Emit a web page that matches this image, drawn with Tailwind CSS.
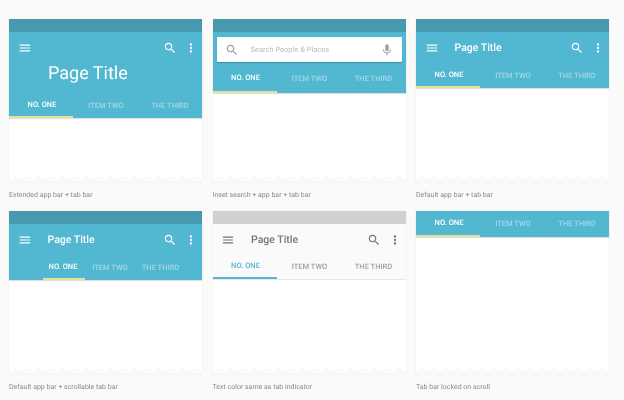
<!DOCTYPE html>
<html lang="en">
<head>
  <meta charset="UTF-8">
  <title>Tabs</title>
  <script src="https://cdn.jsdelivr.net/npm/@tailwindcss/browser@4"></script>
</head>
<body class="bg-[#fafafa] font-['Roboto',sans-serif] w-[624px] h-[400px] overflow-hidden [text-rendering:geometricPrecision]">
  <svg class="hidden">
    <symbol id="menu" viewBox="0 0 24 24"><path d="M3 18h18v-2H3v2zm0-5h18v-2H3v2zm0-7v2h18V6H3z"/></symbol>
    <symbol id="search" viewBox="0 0 24 24"><path d="M15.5 14h-.79l-.28-.27C15.41 12.59 16 11.11 16 9.5 16 5.91 13.09 3 9.5 3S3 5.91 3 9.5 5.91 16 9.5 16c1.61 0 3.09-.59 4.23-1.57l.27.28v.79l5 4.99L20.49 19l-4.99-5zm-6 0C7.01 14 5 11.99 5 9.5S7.01 5 9.5 5 14 7.01 14 9.5 11.99 14 9.5 14z"/></symbol>
    <symbol id="more" viewBox="0 0 24 24"><path d="M12 8c1.1 0 2-.9 2-2s-.9-2-2-2-2 .9-2 2 .9 2 2 2zm0 2c-1.1 0-2 .9-2 2s.9 2 2 2 2-.9 2-2-.9-2-2-2zm0 6c-1.1 0-2 .9-2 2s.9 2 2 2 2-.9 2-2-.9-2-2-2z"/></symbol>
    <symbol id="mic" viewBox="0 0 24 24"><path d="M12 14c1.66 0 2.99-1.34 2.99-3L15 5c0-1.66-1.34-3-3-3S9 3.34 9 5v6c0 1.66 1.34 3 3 3zm5.3-3c0 3-2.54 5.1-5.3 5.1S6.7 14 6.7 11H5c0 3.41 2.72 6.23 6 6.72V21h2v-3.28c3.28-.48 6-3.3 6-6.72h-1.7z"/></symbol>
    <symbol id="zig" viewBox="0 0 193 6" preserveAspectRatio="none">
      <path fill="#fafafa" stroke="#eeeeee" stroke-width="0.7" d="M-1 6 L0 5 L6 1 L12 5 L18 1 L24 5 L30 1 L36 5 L42 1 L48 5 L54 1 L60 5 L66 1 L72 5 L78 1 L84 5 L90 1 L96 5 L102 1 L108 5 L114 1 L120 5 L126 1 L132 5 L138 1 L144 5 L150 1 L156 5 L162 1 L168 5 L174 1 L180 5 L186 1 L192 5 L194 4 L194 7 L-1 7 Z"/>
    </symbol>
  </svg>

  <div class="grid grid-cols-[193px_193px_193px] gap-x-[10.5px] gap-y-[11px] pl-[9px] pt-[19px] text-[#8a8a8a] blur-[0.45px]">

    <!-- Extended app bar -->
    <div>
      <div class="relative h-[163px] bg-white shadow-[0_0_1px_rgba(0,0,0,0.15)]">
        <div class="h-[13px] bg-[#4799ad]"></div>
        <div class="bg-[#52b7d1] h-[86px] flex flex-col text-white shadow-[0_1px_1px_rgba(0,0,0,0.12)]">
          <div class="h-[31px] flex items-center pl-[8.5px] pr-[4px] pt-[1px]">
            <svg class="w-[14px] h-[14px] fill-white"><use href="#menu"/></svg>
            <svg class="w-[14px] h-[14px] fill-white ml-auto"><use href="#search"/></svg>
            <svg class="w-[14px] h-[14px] fill-white ml-[7px]"><use href="#more"/></svg>
          </div>
          <div class="h-[29px] pl-[39px] text-[18px] leading-[21px]">Page Title</div>
          <div class="flex-1 flex text-[7.5px] font-medium">
            <div class="w-[64px] flex items-center justify-center border-b-2 border-[#e4e19c] pt-[2px] pl-[2px]">NO. ONE</div>
            <div class="w-[64px] flex items-center justify-center text-white/45 pt-[2px] pl-[2px]">ITEM TWO</div>
            <div class="w-[64px] flex items-center justify-center text-white/45 pt-[2px] pl-[2px]">THE THIRD</div>
          </div>
        </div>
        <svg class="absolute left-0 bottom-0 w-[193px] h-[6px]"><use href="#zig"/></svg>
      </div>
      <p class="mt-[8px] text-[7px] leading-[10px]">Extended app bar + tab bar</p>
    </div>

    <!-- Inset search -->
    <div>
      <div class="relative h-[163px] bg-white shadow-[0_0_1px_rgba(0,0,0,0.15)]">
        <div class="h-[13px] bg-[#4799ad]"></div>
        <div class="bg-[#52b7d1] h-[61px] flex flex-col text-white shadow-[0_1px_1px_rgba(0,0,0,0.12)]">
          <div class="mx-[4px] mt-[5px] h-[25px] bg-white rounded-[1px] shadow-[0_1px_1px_rgba(0,0,0,0.25)] flex items-center pl-[8px] pr-[8px] text-[#bdbdbd] text-[7.5px]">
            <svg class="w-[14px] h-[14px] fill-[#9e9e9e]"><use href="#search"/></svg>
            <span class="ml-[12px]">Search People &amp; Places</span>
            <svg class="w-[14px] h-[14px] fill-[#9e9e9e] ml-auto"><use href="#mic"/></svg>
          </div>
          <div class="flex-1 flex text-[7.5px] font-medium">
            <div class="w-[64px] flex items-center justify-center border-b-2 border-[#e4e19c] pt-[3px] pl-[2px]">NO. ONE</div>
            <div class="w-[64px] flex items-center justify-center text-white/45 pt-[3px] pl-[2px]">ITEM TWO</div>
            <div class="w-[64px] flex items-center justify-center text-white/45 pt-[3px] pl-[2px]">THE THIRD</div>
          </div>
        </div>
        <svg class="absolute left-0 bottom-0 w-[193px] h-[6px]"><use href="#zig"/></svg>
      </div>
      <p class="mt-[8px] text-[7px] leading-[10px]">Inset search + app bar + tab bar</p>
    </div>

    <!-- Default app bar -->
    <div>
      <div class="relative h-[163px] bg-white shadow-[0_0_1px_rgba(0,0,0,0.15)]">
        <div class="h-[13px] bg-[#4799ad]"></div>
        <div class="bg-[#52b7d1] h-[56px] flex flex-col text-white shadow-[0_1px_1px_rgba(0,0,0,0.12)]">
          <div class="h-[31px] flex items-center pl-[8.5px] pr-[4px] pt-[1px]">
            <svg class="w-[14px] h-[14px] fill-white"><use href="#menu"/></svg>
            <span class="ml-[16px] text-[10.5px] font-medium">Page Title</span>
            <svg class="w-[14px] h-[14px] fill-white ml-auto"><use href="#search"/></svg>
            <svg class="w-[14px] h-[14px] fill-white ml-[7px]"><use href="#more"/></svg>
          </div>
          <div class="flex-1 flex text-[7.5px] font-medium">
            <div class="w-[64px] flex items-center justify-center border-b-2 border-[#e4e19c] pl-[2px]">NO. ONE</div>
            <div class="w-[64px] flex items-center justify-center text-white/45 pl-[2px]">ITEM TWO</div>
            <div class="w-[64px] flex items-center justify-center text-white/45 pl-[2px]">THE THIRD</div>
          </div>
        </div>
        <svg class="absolute left-0 bottom-0 w-[193px] h-[6px]"><use href="#zig"/></svg>
      </div>
      <p class="mt-[8px] text-[7px] leading-[10px]">Default app bar + tab bar</p>
    </div>

    <!-- Scrollable tabs -->
    <div>
      <div class="relative h-[163px] bg-white shadow-[0_0_1px_rgba(0,0,0,0.15)]">
        <div class="h-[13px] bg-[#4799ad]"></div>
        <div class="bg-[#52b7d1] h-[56px] flex flex-col text-white shadow-[0_1px_1px_rgba(0,0,0,0.12)]">
          <div class="h-[31px] flex items-center pl-[8.5px] pr-[4px] pt-[1px]">
            <svg class="w-[14px] h-[14px] fill-white"><use href="#menu"/></svg>
            <span class="ml-[16px] text-[10.5px] font-medium">Page Title</span>
            <svg class="w-[14px] h-[14px] fill-white ml-auto"><use href="#search"/></svg>
            <svg class="w-[14px] h-[14px] fill-white ml-[7px]"><use href="#more"/></svg>
          </div>
          <div class="flex-1 flex text-[7.5px] font-medium pl-[34px]">
            <div class="w-[42px] flex items-center justify-center border-b-2 border-[#e4e19c] pr-[2px]">NO. ONE</div>
            <div class="w-[50px] flex items-center justify-center text-white/45">ITEM TWO</div>
            <div class="w-[51px] flex items-center justify-center text-white/45">THE THIRD</div>
          </div>
        </div>
        <svg class="absolute left-0 bottom-0 w-[193px] h-[6px]"><use href="#zig"/></svg>
      </div>
      <p class="mt-[8px] text-[7px] leading-[10px]">Default app bar + scrollable tab bar</p>
    </div>

    <!-- Light app bar -->
    <div>
      <div class="relative h-[163px] bg-white shadow-[0_0_1px_rgba(0,0,0,0.15)]">
        <div class="h-[13px] bg-[#d0d0d0]"></div>
        <div class="bg-[#fafafa] h-[56px] flex flex-col text-[#757575] border-b border-[#e8e8e8]">
          <div class="h-[31px] flex items-center pl-[8.5px] pr-[4px] pt-[1px]">
            <svg class="w-[14px] h-[14px] fill-[#757575]"><use href="#menu"/></svg>
            <span class="ml-[16px] text-[10.5px] font-medium">Page Title</span>
            <svg class="w-[14px] h-[14px] fill-[#757575] ml-auto"><use href="#search"/></svg>
            <svg class="w-[14px] h-[14px] fill-[#757575] ml-[7px]"><use href="#more"/></svg>
          </div>
          <div class="flex-1 flex text-[7.5px] font-medium">
            <div class="w-[64px] flex items-center justify-center border-b-2 border-[#52b7d1] text-[#52b7d1] pl-[2px]">NO. ONE</div>
            <div class="w-[64px] flex items-center justify-center text-[#9e9e9e] pl-[2px]">ITEM TWO</div>
            <div class="w-[64px] flex items-center justify-center text-[#9e9e9e] pl-[2px]">THE THIRD</div>
          </div>
        </div>
        <svg class="absolute left-0 bottom-0 w-[193px] h-[6px]"><use href="#zig"/></svg>
      </div>
      <p class="mt-[8px] text-[7px] leading-[10px]">Text color same as tab indicator</p>
    </div>

    <!-- Locked tabs -->
    <div>
      <div class="relative h-[163px] bg-white shadow-[0_0_1px_rgba(0,0,0,0.15)]">
        <div class="bg-[#52b7d1] h-[26px] flex text-white text-[7.5px] font-medium shadow-[0_1px_1px_rgba(0,0,0,0.12)]">
          <div class="w-[64px] flex items-center justify-center border-b-2 border-[#e4e19c] pl-[2px]">NO. ONE</div>
          <div class="w-[64px] flex items-center justify-center text-white/45 pl-[2px]">ITEM TWO</div>
          <div class="w-[64px] flex items-center justify-center text-white/45 pl-[2px]">THE THIRD</div>
        </div>
        <svg class="absolute left-0 bottom-0 w-[193px] h-[6px]"><use href="#zig"/></svg>
      </div>
      <p class="mt-[8px] text-[7px] leading-[10px]">Tab bar locked on scroll</p>
    </div>

  </div>
</body>
</html>
